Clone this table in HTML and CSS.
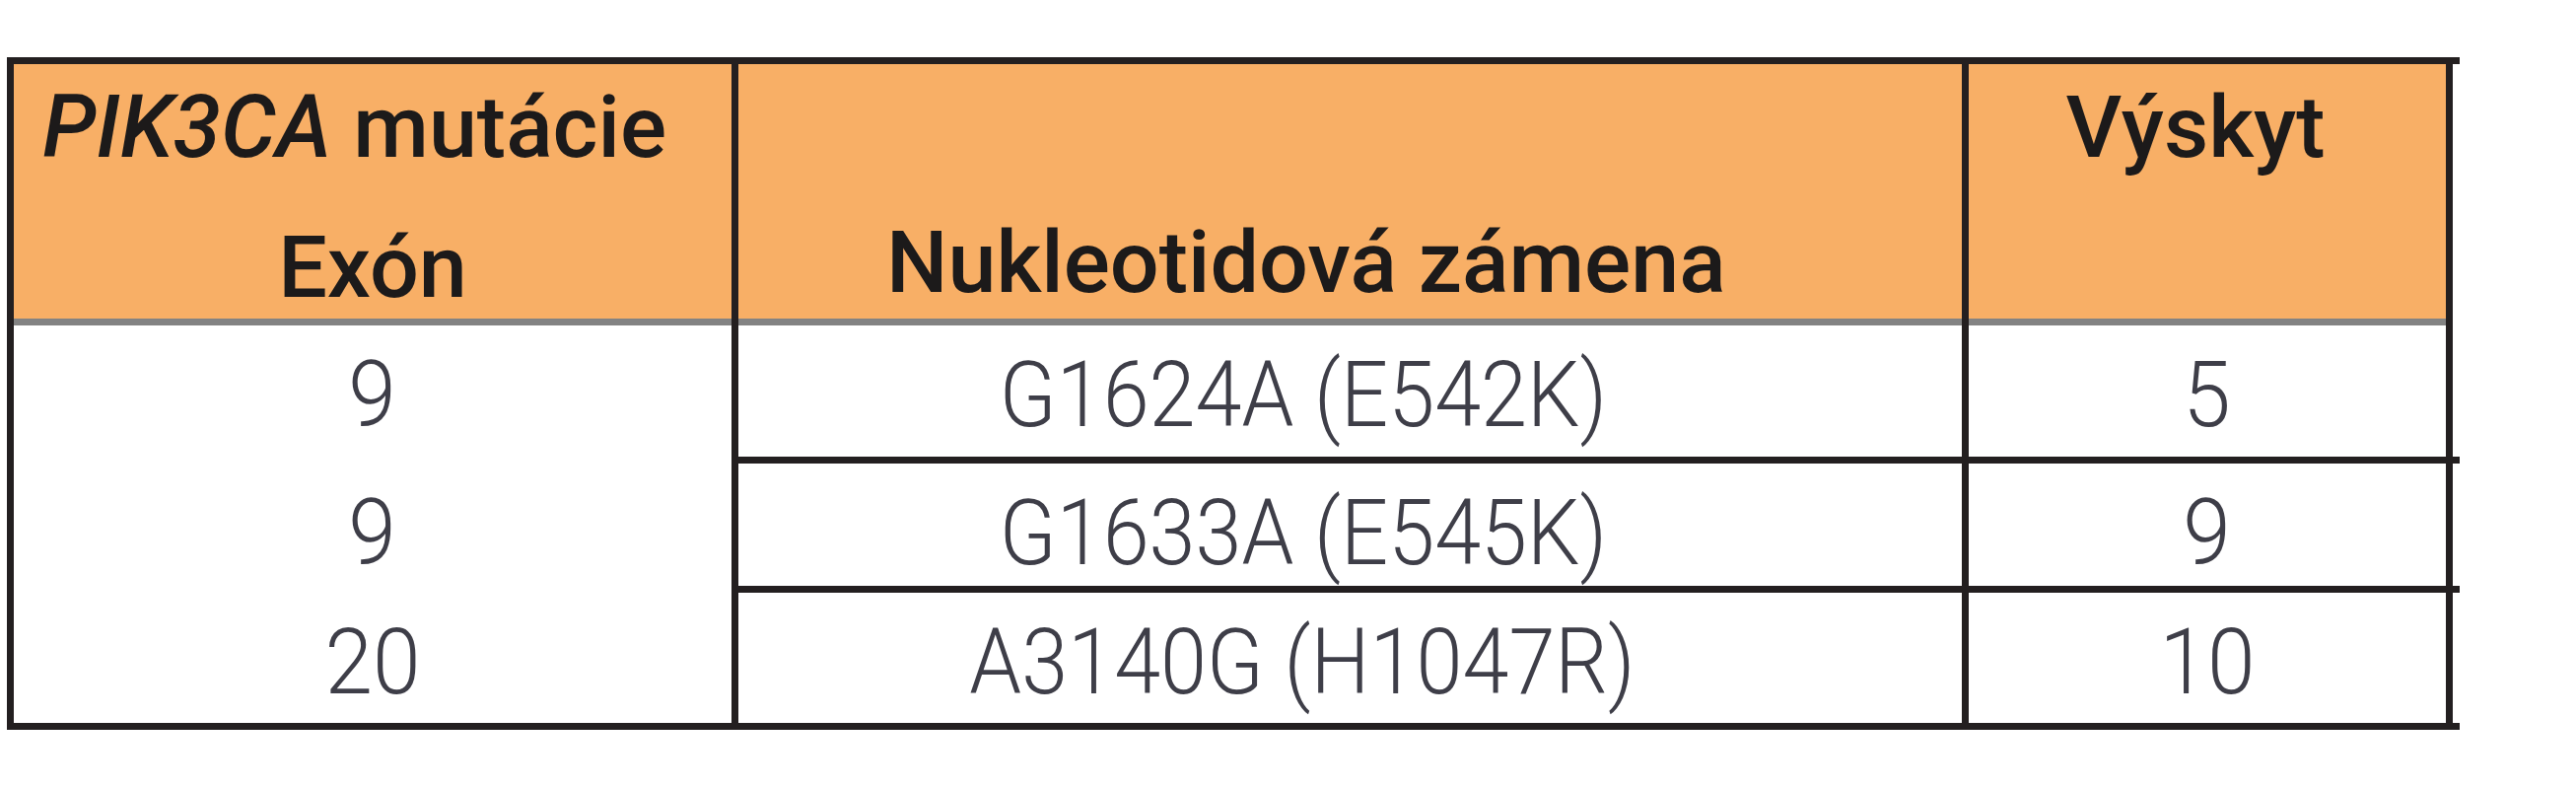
FILE: index.html
```html
<!DOCTYPE html>
<html lang="sk">
<head>
<meta charset="utf-8">
<title>PIK3CA mutácie</title>
<link rel="stylesheet" href="styles.css">
</head>
<body>
<div class="tbl">
  <div class="rule"></div>

  <div class="th c1">
    <div class="ln pad-l1"><span class="hx"><i>PIK3CA</i> mutácie</span></div>
    <div class="ln center"><span class="hx mid">Exón</span></div>
  </div>
  <div class="th c2">
    <div class="ln"></div>
    <div class="ln pad-l2"><span class="hx">Nukleotidová zámena</span></div>
  </div>
  <div class="th c3">
    <div class="ln center pad-r3"><span class="hx mid">Výskyt</span></div>
    <div class="ln"></div>
  </div>
  <div class="oh-head"></div>

  <div class="td c1"><span class="dx">9</span></div>
  <div class="td c2 line pad-r2"><span class="bx">G1624A (E542K)</span></div>
  <div class="td c3 line"><span class="dx">5</span></div>
  <div class="oh line"></div>

  <div class="td c1"><span class="dx">9</span></div>
  <div class="td c2 line pad-r2"><span class="bx">G1633A (E545K)</span></div>
  <div class="td c3 line"><span class="dx">9</span></div>
  <div class="oh line"></div>

  <div class="td c1"><span class="dx">20</span></div>
  <div class="td c2 pad-r2"><span class="bx">A3140G (H1047R)</span></div>
  <div class="td c3"><span class="dx">10</span></div>
  <div class="oh"></div>

  <div class="rule"></div>
</div>
</body>
</html>
```

FILE: styles.css
```css
* { box-sizing: border-box; }

body {
  margin: 0;
  background: #ffffff;
}

.tbl {
  display: grid;
  grid-template-columns: 735px 1248px 498px 7px;
  grid-template-rows: 7px 265px 140px 131px 132px 7px;
  width: 2488px;
  margin: 58px 0 0 7px;
  font-family: Roboto, "Liberation Sans", Arial, sans-serif;
}

.rule {
  grid-column: 1 / -1;
  background: #231f20;
}

.th {
  display: flex;
  flex-direction: column;
  gap: 14px;
  border-left: 7px solid #231f20;
  background: linear-gradient(to top, #838383 7px, #f8af66 7px);
  color: #1c1a1a;
  font-size: 88px;
  font-weight: 500;
}

.th.c3 { border-right: 7px solid #231f20; }

.ln {
  height: 128px;
  line-height: 128px;
  white-space: nowrap;
}

.center { text-align: center; }
.pad-l1 { padding-left: 29px; }
.pad-l2 { padding-left: 150px; }
.pad-r3 { padding-right: 24px; }

.hx {
  display: inline-block;
}

.oh-head { background: #ffffff; }

.td {
  padding-top: 19px;
  color: #3e3e48;
  font-size: 92px;
  font-weight: 300;
  line-height: 103px;
  text-align: center;
  white-space: nowrap;
  background: #ffffff;
}

.td.c1 { border-left: 7px solid #231f20; }
.td.c2 { border-left: 7px solid #231f20; }
.td.c3 {
  border-left: 7px solid #231f20;
  border-right: 7px solid #231f20;
}

.pad-r2 { padding-right: 96px; }

.line { border-bottom: 7px solid #231f20; }

.bx {
  display: inline-block;
  transform: scaleX(0.92);
  transform-origin: center center;
}

.dx {
  display: inline-block;
  transform: scaleX(0.95);
  transform-origin: center center;
}
```
